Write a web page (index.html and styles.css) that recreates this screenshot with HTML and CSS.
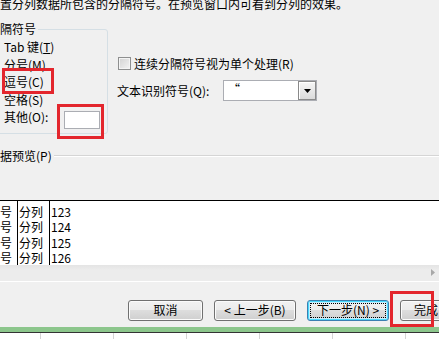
FILE: index.html
```html
<!DOCTYPE html>
<html lang="zh-CN">
<head>
    <meta charset="UTF-8">
    <title>文本分列向导 - 分隔符号</title>
    <link rel="stylesheet" href="styles.css">
</head>
<body>

    <div class="dialog">
        <p class="intro">置分列数据所包含的分隔符号。在预览窗口内可看到分列的效果。</p>

        <div class="options">
            <fieldset class="group">
                <legend>隔符号</legend>
                <div class="opt">Tab 键(<u>T</u>)</div>
                <div class="opt">分号(M)</div>
                <div class="opt">逗号(C)</div>
                <div class="opt">空格(S)</div>
                <div class="opt"><span class="other-label">其他(O):</span><span class="other-box"></span></div>
            </fieldset>

            <div class="right">
                <label class="check"><span class="box"></span>连续分隔符号视为单个处理(R)</label>
                <div class="qualifier">
                    <span class="q-label">文本识别符号(Q):</span>
                    <div class="combo">
                        <span class="combo-value">“</span>
                        <span class="drop">
                            <svg width="7" height="4" viewBox="0 0 7 4"><path d="M0 0H7L3.5 4Z" fill="#000"/></svg>
                        </span>
                    </div>
                </div>
            </div>
        </div>

        <div class="section">
            <span>据预览(P)</span>
            <i class="rule"></i>
        </div>

        <div class="preview">
            <div class="rows">
                <div class="row"><span class="c1">号</span><span class="c2">分列</span><span class="c3">123</span></div>
                <div class="row"><span class="c1">号</span><span class="c2">分列</span><span class="c3">124</span></div>
                <div class="row"><span class="c1">号</span><span class="c2">分列</span><span class="c3">125</span></div>
                <div class="row"><span class="c1">号</span><span class="c2">分列</span><span class="c3">126</span></div>
            </div>
            <div class="hscroll">
                <svg width="4" height="7" viewBox="0 0 4 7"><path d="M0 0L4 3.5L0 7Z" fill="#a8a8a8"/></svg>
            </div>
        </div>

        <div class="buttons">
            <button class="btn btn-cancel">取消</button>
            <button class="btn">&lt; 上一步(B)</button>
            <button class="btn btn-focus">下一步(N) &gt;</button>
            <button class="btn btn-finish">完成</button>
        </div>

        <div class="sheet">
            <div class="bar"></div>
            <div class="cells">
                <span></span><span></span><span></span><span></span><span></span><span></span>
            </div>
        </div>

        <!-- annotation boxes drawn over the dialog -->
        <div class="mark mark-comma"></div>
        <div class="mark mark-other"></div>
        <div class="mark mark-finish"></div>
    </div>

</body>
</html>
```

FILE: styles.css
```css
body {
    margin: 0;
    background: #f0f0f0;
    font-family: "Noto Sans CJK SC", "DejaVu Sans", sans-serif;
    font-size: 12px;
    color: #000;
}
.dialog {
    position: relative;
    width: 439px;
    height: 339px;
    overflow: hidden;
}
.intro {
    margin: -2px 0 0;
    line-height: 12px;
    white-space: nowrap;
}
.options {
    display: flex;
    margin-top: 13px;
}
.group {
    box-sizing: border-box;
    width: 118px;
    min-width: 0;
    margin: 0 0 0 -10px;
    padding: 3px 0 7px 13px;
    border: 1px solid #d5dfe5;
    border-radius: 3px;
}
.group legend {
    margin-left: -4px;
    padding: 0 2px 0 0;
    line-height: 12px;
}
.opt {
    display: flex;
    align-items: flex-start;
    height: 17.5px;
    line-height: 17.5px;
    white-space: nowrap;
}
.other-label {
    width: 60px;
}
.other-box {
    box-sizing: border-box;
    width: 36px;
    height: 18px;
    margin-top: 3px;
    border: 1px solid #abadb3;
    background: #fff;
}
.right {
    padding-left: 10px;
}
.check {
    display: flex;
    align-items: center;
    gap: 3px;
    height: 13px;
    margin-top: 34px;
    white-space: nowrap;
}
.box {
    box-sizing: border-box;
    width: 13px;
    height: 13px;
    border: 1px solid #8e8f8f;
    background: linear-gradient(135deg, #d2d2d2, #f4f4f4);
    box-shadow: inset 0 0 0 1px #f4f4f4;
}
.qualifier {
    display: flex;
    align-items: center;
    margin: 10px 0 0 -1px;
    white-space: nowrap;
}
.q-label {
    width: 106px;
}
.combo {
    box-sizing: border-box;
    display: flex;
    justify-content: space-between;
    width: 94px;
    height: 21px;
    border: 1px solid #abadb3;
    background: #fff;
}
.combo-value {
    padding-left: 4px;
    line-height: 16px;
}
.drop {
    box-sizing: border-box;
    display: flex;
    align-items: center;
    justify-content: center;
    width: 18px;
    height: 19px;
    border: 1px solid #8a8a8a;
    background: linear-gradient(#f6f6f6, #dadada);
    box-shadow: inset 1px 1px 0 #fff;
}
.section {
    display: flex;
    align-items: center;
    margin-top: 16px;
    line-height: 12px;
    white-space: nowrap;
}
.rule {
    flex: 1;
    height: 0;
    margin-left: 2px;
    border-top: 1px solid #d5d5d5;
    border-bottom: 1px solid #fff;
}
.preview {
    margin-top: 38px;
    background: #fff;
    border-top: 1px solid #000;
    border-bottom: 1px solid #fff;
}
.rows {
    height: 64px;
    overflow: hidden;
}
.row {
    display: flex;
    height: 15.5px;
}
.row:first-child {
    height: 18.5px;
}
.row span {
    display: flex;
    align-items: flex-end;
    line-height: 15.5px;
}
.c1 {
    width: 17px;
}
.c2 {
    width: 30px;
    padding-left: 1px;
    border-left: 1px solid #000;
}
.c3 {
    padding-left: 1px;
    border-left: 1px solid #000;
}
.hscroll {
    display: flex;
    align-items: center;
    justify-content: flex-end;
    height: 16px;
    padding-right: 4px;
    background: linear-gradient(#e4e4e4, #ececec 30%, #ececec);
}
.buttons {
    display: flex;
    gap: 11px;
    margin-top: 18px;
    padding-left: 128px;
}
.btn {
    position: relative;
    flex: none;
    width: 82px;
    height: 21px;
    padding: 0;
    border: 1px solid #707070;
    border-radius: 3px;
    background: linear-gradient(#f2f2f2 0%, #ebebeb 50%, #dddddd 50%, #cfcfcf 100%);
    box-shadow: inset 0 0 0 1px #fbfbfb;
    font-family: inherit;
    font-size: 12px;
    line-height: 18px;
    color: #000;
    white-space: nowrap;
}
.btn-cancel {
    width: 75px;
}
.btn-finish {
    width: 52px;
}
.btn-focus {
    border-color: #3c7fb1;
    box-shadow: inset 0 0 0 1px #48d8fb, inset 0 0 0 2px #c7ecfd;
}
.btn-focus::after {
    content: "";
    position: absolute;
    inset: 2px;
    border: 1px dotted #000;
}
.sheet {
    margin-top: 6px;
}
.bar {
    height: 5px;
    background: #8cc68c;
    border-bottom: 1px solid #333;
}
.cells {
    display: flex;
    height: 10px;
    padding-left: 40px;
    background: #fff;
}
.cells span {
    flex: none;
    width: 72px;
    border-left: 1px solid #d4d4d4;
}
.mark {
    position: absolute;
    box-sizing: border-box;
    border: 3px solid #e3262d;
}
.mark-comma {
    left: 2px;
    top: 68px;
    width: 52px;
    height: 26px;
}
.mark-other {
    left: 57px;
    top: 104px;
    width: 47px;
    height: 35px;
}
.mark-finish {
    left: 390px;
    top: 291px;
    width: 44px;
    height: 36px;
}
```
